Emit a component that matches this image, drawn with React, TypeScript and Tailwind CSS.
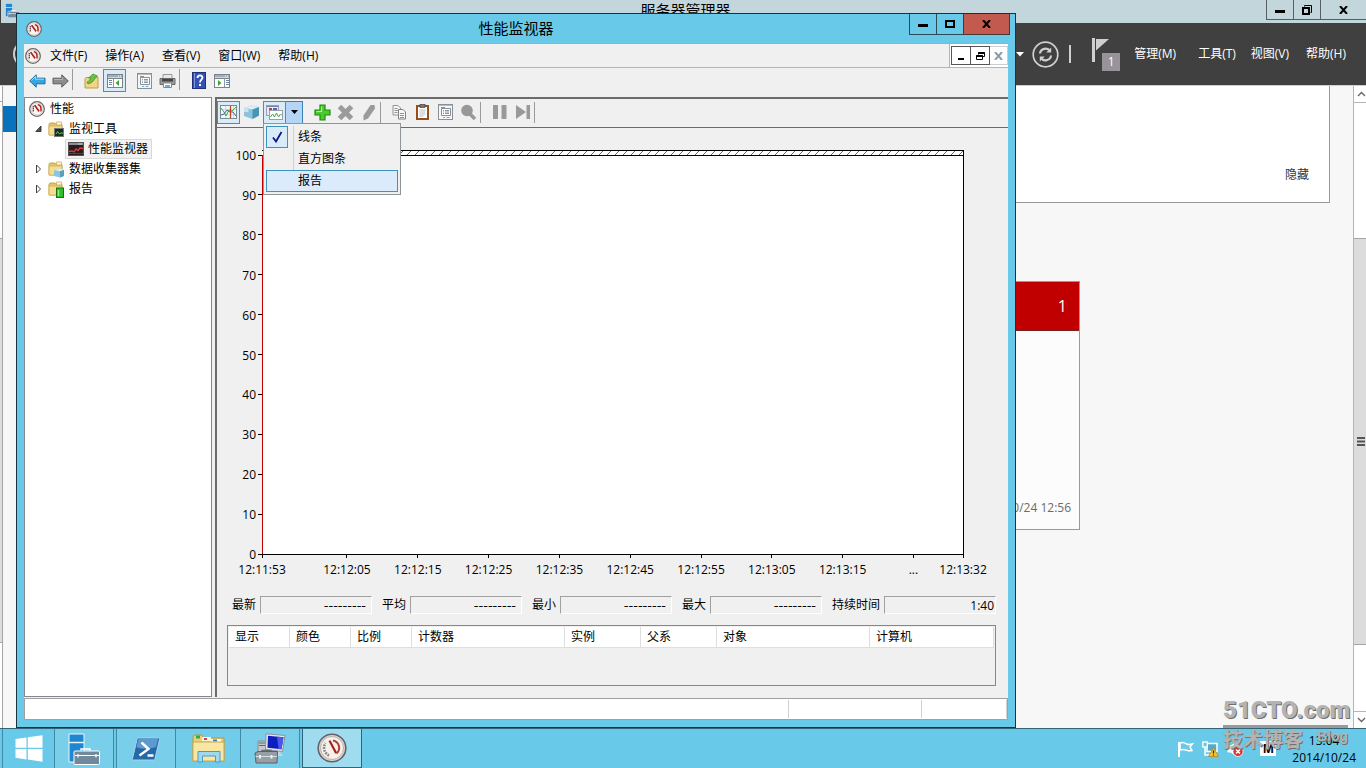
import type { ReactNode } from "react";
import clsx from "clsx";

const timeTicks = [
  { at: 0, label: "12:11:53" },
  { at: 12, label: "12:12:05" },
  { at: 22, label: "12:12:15" },
  { at: 32, label: "12:12:25" },
  { at: 42, label: "12:12:35" },
  { at: 52, label: "12:12:45" },
  { at: 62, label: "12:12:55" },
  { at: 72, label: "12:13:05" },
  { at: 82, label: "12:13:15" },
  { at: 92, label: "..." },
  { at: 99, label: "12:13:32" },
];

const valueTicks = [100, 90, 80, 70, 60, 50, 40, 30, 20, 10, 0];

const stats = [
  { id: "last", label: "最新" },
  { id: "average", label: "平均" },
  { id: "minimum", label: "最小" },
  { id: "maximum", label: "最大" },
];

const columns = [
  { name: "显示", width: "w-[61px]" },
  { name: "颜色", width: "w-[61px]" },
  { name: "比例", width: "w-[61px]" },
  { name: "计数器", width: "w-[153px]" },
  { name: "实例", width: "w-[76px]" },
  { name: "父系", width: "w-[76px]" },
  { name: "对象", width: "w-[153px]" },
  { name: "计算机", width: "w-auto" },
];

/* ---------- Icons ---------- */

function GaugeIcon({ size = 16 }: { size?: number }) {
  return (
    <svg width={size} height={size} viewBox="0 0 16 16">
      <circle cx="8" cy="8" r="7.3" fill="#f8f5f3" stroke="#6b6664" strokeWidth="1.3" />
      <circle cx="8" cy="8" r="6" fill="none" stroke="#cfc9c6" strokeWidth="0.8" />
      <path d="M4.300 5v5.500" fill="none" stroke="#6a4a48" strokeWidth="1.4" strokeDasharray="1.500 0.500" />
      <path d="M8.800 3.800c2 .2 3.200 2 3.200 4v2.700" fill="none" stroke="#b3201c" strokeWidth="1.500" />
      <path d="M4.800 4.500l1.600-.7 4.300 6-1.200 1.200z" fill="#b3201c" />
    </svg>
  );
}

function BigGaugeIcon() {
  return (
    <svg width="30" height="30" viewBox="0 0 30 30">
      <circle cx="15" cy="15" r="13.800" fill="#d9d5d2" stroke="#5f6266" strokeWidth="1.600" />
      <circle cx="15" cy="15" r="11.500" fill="#f7f1ec" stroke="#b9b2ad" />
      <path d="M12 22.500A8.500 8.500 0 0 1 8.500 10" fill="none" stroke="#85878b" strokeWidth="2.600" strokeDasharray="1.800 1" />
      <path d="M16 7.500c6 1 8.500 8.500 3.500 13" fill="none" stroke="#b93a31" strokeWidth="2" />
      <path d="M11.500 8l2-.8 6.500 12.300-1.800 1.200z" fill="#a81f18" />
    </svg>
  );
}

function ArrowIcon({ forward }: { forward?: boolean }) {
  return forward ? (
    <svg width="17" height="16" viewBox="0 0 17 16">
      <path d="M16.300 8 9.800 1.800v3.400H1v5.600h8.800v3.400z" fill="#8c8c8c" stroke="#5e5e5e" />
      <path d="M2 6.500h8.500V4.300" fill="none" stroke="#b5b5b5" />
    </svg>
  ) : (
    <svg width="17" height="16" viewBox="0 0 17 16">
      <path d="M.7 8l6.500-6.200v3.400H16v5.600H7.200v3.400z" fill="#37a6e0" stroke="#1d6ea8" />
      <path d="M2.500 7.500l4-4v2.700H15" fill="none" stroke="#9fdcf7" />
    </svg>
  );
}

function FolderShape() {
  return (
    <>
      <path d="M1 3.500 2 2h5l1 1.500h6V14H1z" fill="#e5c66b" stroke="#b6933a" strokeWidth="0.800" />
      <path d="M8.500 1h5v3h-5z" fill="#fdf7dd" stroke="#c3a550" strokeWidth="0.700" />
      <path d="M1 5h13v9H1z" fill="#f5dd8c" stroke="#d0b05c" strokeWidth="0.800" />
    </>
  );
}

function FolderUpIcon() {
  return (
    <svg width="16" height="16" viewBox="0 0 16 16">
      <path d="M1 6l1-1.500h4L7 6l7-2v11H1z" fill="#f3d684" stroke="#c09c48" />
      <path d="M3 9c2-.5 3-2 3.500-4.500L4.500 5 9 1l4.500 2-2 1C10.500 7.500 8 10 4 11z" fill="#6cc04a" stroke="#3b8f25" strokeWidth="0.700" />
    </svg>
  );
}

function TreeFolderIcon({ kind }: { kind: "monitor" | "collector" | "report" }) {
  return (
    <svg width="17" height="17" viewBox="0 0 17 17">
      <FolderShape />
      {kind === "monitor" && (
        <>
          <rect x="6.500" y="7.500" width="9" height="8" fill="#1d2a22" stroke="#777" />
          <path d="M8 13l1.500-2.500L11.500 13l1.500-1h2" fill="none" stroke="#4be04b" />
        </>
      )}
      {kind === "collector" && (
        <>
          <path d="M6 9l6-1.500L16 9v6l-4 1.500L6 15z" fill="#8cc4dd" />
          <path d="M6 9l6-1.500L16 9l-4 1.200z" fill="#d8eff8" />
          <path d="M12 10.200 16 9v6l-4 1.500z" fill="#5b9fbe" />
        </>
      )}
      {kind === "report" && (
        <>
          <rect x="8.500" y="7" width="7" height="9.500" fill="#2fbf2a" stroke="#14701a" />
          <path d="M10.500 9v6" stroke="#8df07d" strokeWidth="1.500" />
        </>
      )}
    </svg>
  );
}

function MonitorIcon() {
  return (
    <svg width="16" height="14" viewBox="0 0 16 14">
      <rect x="0.500" y="0.500" width="15" height="13" fill="#2a1d1f" stroke="#555" />
      <path d="M1 1h14v2H1z" fill="#8d8d96" />
      <path d="M10.500 2h1M12.500 2h1" stroke="#fff" />
      <path d="M1 9.500l3-.5 2 1 2-3 2 1.500L12 6l3 .5" fill="none" stroke="#e23b3b" strokeWidth="1.300" />
      <path d="M1 11.500h14" stroke="#6b3a3a" />
    </svg>
  );
}

function PaneIcon({ right }: { right?: boolean }) {
  return (
    <svg width="16" height="14" viewBox="0 0 16 14">
      <rect x="0.500" y="0.500" width="15" height="13" fill="#fff" stroke="#7a828c" />
      <path d="M1 1h14v2.500H1z" fill="#a3adb8" />
      <path d="M1 4.500h14" stroke="#7a828c" />
      <path d="M11 2h1M13 2h1" stroke="#fff" />
      <path d={right ? "M10.500 4v9" : "M6.500 4v9"} stroke="#8b97a5" />
      <path d={right ? "M12 6.500h3M12 8.500h3M12 10.500h3" : "M2 6.500h3M2 8.500h3M2 10.500h3"} stroke="#6a82a0" />
      <path d={right ? "M4 6v6l3.500-3z" : "M12 6v6L8.500 9z"} fill="#3fa52f" />
    </svg>
  );
}

function PropertiesIcon() {
  return (
    <svg width="16" height="16" viewBox="0 0 16 16">
      <rect x="0.500" y="0.500" width="14" height="15" fill="#f4f6f8" stroke="#8a9096" />
      <path d="M1 1.500h13" stroke="#b6bcc2" />
      <path d="M3.500 4.500h9v7h-9z" fill="#fff" stroke="#8a9096" />
      <path d="M3 3.500h4" stroke="#8a9096" />
      <path d="M5 6.500h1M7 6.500h4M5 8h1M7 8h4M5 9.500h1M7 9.500h4" stroke="#6c7a88" strokeWidth="0.800" />
      <path d="M5 13.500h2M8.500 13.500h3" stroke="#6bb6cc" />
    </svg>
  );
}

function PrinterIcon() {
  return (
    <svg width="17" height="16" viewBox="0 0 17 16">
      <path d="M4 1.500h9V6H4z" fill="#e8e8e8" stroke="#999" />
      <path d="M1 5.500h15v6H1z" fill="#9a9a9a" stroke="#6b6b6b" />
      <path d="M3 6h11v2.500H3z" fill="#444" />
      <path d="M4.500 10h8v4.500h-8z" fill="#fff" stroke="#888" />
      <path d="M6 12h5v2H6z" fill="#63b4d8" />
    </svg>
  );
}

function HelpIcon() {
  return (
    <svg width="14" height="17" viewBox="0 0 14 17">
      <rect x="0.500" y="0.500" width="13" height="16" fill="#3350b4" stroke="#1f2f7a" />
      <path d="M2.500 1v15" stroke="#7f96e0" />
      <path d="M5.500 6c0-3.400 5-3.200 5-.4C10.500 7.600 8 7.800 8 10.500" fill="none" stroke="#fff" strokeWidth="1.800" />
      <rect x="7" y="12" width="2" height="2" fill="#fff" />
    </svg>
  );
}

function ChartViewIcon() {
  return (
    <svg width="17" height="14" viewBox="0 0 17 14">
      <rect x="0.500" y="0.500" width="16" height="13" fill="#eef8f8" stroke="#7d8c93" />
      <path d="M1 4.500h15M1 9.500h15M5.500 1v12M13.500 1v12" stroke="#b7d3d8" strokeWidth="0.700" />
      <path d="M1 3l3 4 2 4 3-6 3 1 4-4" fill="none" stroke="#4ba54f" />
      <path d="M1 10l3-1 3-4 3 2 3 0 3 4" fill="none" stroke="#4c6496" />
      <path d="M10.500 1v12" stroke="#d03a1c" strokeWidth="1.200" />
    </svg>
  );
}

function CubeIcon() {
  return (
    <svg width="17" height="16" viewBox="0 0 17 16">
      <path d="M1 4l7-2.500L16 3v8.500L9.500 15 1 12z" fill="#8cc3da" />
      <path d="M1 4l7-2.500L16 3 9.500 5.500z" fill="#d9eef6" />
      <path d="M9.500 5.500 16 3v8.500L9.500 15z" fill="#4a94b5" />
      <path d="M1 4l4.500.8v3.500L1 8z" fill="#c4e4f0" />
    </svg>
  );
}

function GraphTypeIcon() {
  return (
    <svg width="17" height="15" viewBox="0 0 17 15">
      <rect x="0.500" y="0.500" width="12" height="10" fill="#e9ebf3" stroke="#9a9fb0" />
      <path d="M1 1.500h11" stroke="#7b80ad" />
      <path d="M3 3h3v3H3z" fill="#c23c50" />
      <path d="M7 3h4v2H7z" fill="#5a62b0" />
      <rect x="3.500" y="5.500" width="13" height="9" fill="#fff" stroke="#9a9fb0" />
      <path d="M4.500 12l2-3 2 3 2-4 2 4 2-3 1.500 1.500" fill="none" stroke="#45a545" />
    </svg>
  );
}

function PlusIcon() {
  return (
    <svg width="17" height="17" viewBox="0 0 17 17">
      <path d="M6 1h5v5h5v5h-5v5H6v-5H1V6h5z" fill="#4cc92c" stroke="#1f8a12" strokeWidth="1.200" />
      <path d="M7.500 2.500v5h-5" fill="none" stroke="#b2f09a" strokeWidth="1.200" />
    </svg>
  );
}

function DeleteIcon() {
  return (
    <svg width="17" height="17" viewBox="0 0 17 17">
      <path d="M2.500 2.500l12 12M14.500 2.500l-12 12" stroke="#9b9b9b" strokeWidth="5" />
    </svg>
  );
}

function HighlightIcon() {
  return (
    <svg width="14" height="17" viewBox="0 0 14 17">
      <path d="M8.500 1h4l.5 3.500L6 14.500 1.500 16.500l0-5z" fill="#9b9b9b" />
    </svg>
  );
}

function CopyIcon() {
  return (
    <svg width="15" height="16" viewBox="0 0 15 16">
      <path d="M1 1.500h5l2.500 2.500v7H1z" fill="#f6f6f6" stroke="#929292" />
      <path d="M2.500 4.500h3M2.500 6.500h4M2.500 8.500h3" stroke="#929292" />
      <path d="M6.500 5.500h4.500L13.500 8v7h-7z" fill="#f6f6f6" stroke="#808080" />
      <path d="M8 9.500h4M8 11.500h4M8 13.500h4" stroke="#929292" />
    </svg>
  );
}

function PasteIcon() {
  return (
    <svg width="13" height="16" viewBox="0 0 13 16">
      <rect x="1" y="2" width="11" height="13" fill="#fff" stroke="#93501c" strokeWidth="2" />
      <rect x="4" y="0.500" width="5" height="3" fill="#777" stroke="#444" strokeWidth="0.700" />
      <path d="M3.500 6h6M3.500 8h6M3.500 10h6M3.500 12h4" stroke="#b6bcc2" />
    </svg>
  );
}

function ZoomIcon() {
  return (
    <svg width="17" height="16" viewBox="0 0 17 16">
      <circle cx="7" cy="6.500" r="5.800" fill="#989898" />
      <path d="M10 10l5 5" stroke="#989898" strokeWidth="3.500" />
    </svg>
  );
}

function PauseIcon() {
  return (
    <svg width="14" height="14" viewBox="0 0 14 14">
      <path d="M0 0h5v14H0zM8.500 0h5v14h-5z" fill="#999" />
    </svg>
  );
}

function NextIcon() {
  return (
    <svg width="14" height="14" viewBox="0 0 14 14">
      <path d="M0 0l10 7-10 7zM10.500 0H14v14h-3.500z" fill="#999" />
    </svg>
  );
}

function MinimizeGlyph() {
  return (
    <svg width="10" height="10" viewBox="0 0 10 10">
      <path d="M0 5h10v3H0z" fill="#000" />
    </svg>
  );
}

function MaximizeGlyph() {
  return (
    <svg width="10" height="8" viewBox="0 0 10 8">
      <rect x="1" y="1" width="8" height="6" fill="none" stroke="#000" strokeWidth="2" />
    </svg>
  );
}

function RestoreGlyph() {
  return (
    <svg width="10" height="10" viewBox="0 0 10 10">
      <path d="M2.500 1.500V.5h7v7h-1" fill="none" stroke="#000" />
      <rect x="1" y="3" width="6" height="6" fill="none" stroke="#000" strokeWidth="2" />
    </svg>
  );
}

function CloseGlyph({ color = "#000" }: { color?: string }) {
  return (
    <svg width="9" height="8" viewBox="0 0 9 8">
      <path d="M1 0l7 8M8 0 1 8" stroke={color} strokeWidth="2" />
    </svg>
  );
}

function ServerIcon({ size }: { size: number }) {
  return (
    <svg width={size} height={size} viewBox="0 0 32 32">
      <path d="M1 1h15v28H1z" fill="#1f86d0" stroke="#e8f6fc" />
      <path d="M1 9.500h15" stroke="#e8f6fc" strokeWidth="1.500" />
      <path d="M13 17.500V16h9v1.500" fill="none" stroke="#fff" strokeWidth="1.500" />
      <rect x="6" y="18" width="25.500" height="13.500" rx="1" fill="#71899a" stroke="#fff" />
      <path d="M7 22.500h24M10 21v3.500M28 21v3.500" stroke="#fff" strokeWidth="1.200" />
    </svg>
  );
}

function StartIcon() {
  return (
    <svg width="28" height="27" viewBox="0 0 28 27">
      <path d="M.5 4 11.500 2.400V12.700H.5zM12.800 2.200 27.500.2v12.500H12.800zM.5 14h11v10.400L.5 22.800zM12.800 14h14.700v12.700l-14.700-2.100z" fill="#fff" />
    </svg>
  );
}

function PowerShellIcon() {
  return (
    <svg width="28" height="24" viewBox="0 0 28 24">
      <path d="M6 1h20.500c1 0 1.200.6 1 1.500L23 21.500c-.3 1-1 1.500-2 1.500H1.500C.6 23 .3 22.400.5 21.500L5 2.500C5.200 1.500 5.500 1 6 1z" fill="#2469a8" stroke="#a9d3ee" />
      <path d="M6.500 2h19.500l-2 8C17 12 9 12 4.500 10z" fill="#5a9bd0" />
      <path d="M9.500 5.500l7 6.500-9 6.500M15.500 18.500h6" fill="none" stroke="#fff" strokeWidth="2.400" />
    </svg>
  );
}

function ExplorerIcon() {
  return (
    <svg width="33" height="29" viewBox="0 0 33 29">
      <path d="M1 3l1-2h8l1 3h21v23H1z" fill="#ead07a" stroke="#b8963e" />
      <path d="M4 1.500h4v3H4z" fill="#36a84a" />
      <path d="M10 3h9v4h-9z" fill="#fbf6e2" />
      <path d="M12 4h3v2h-3z" fill="#d0492e" />
      <path d="M19 5h10v3H19z" fill="#fbf6e2" />
      <path d="M21 5.500h4v2h-4z" fill="#3a7fc0" />
      <path d="M1 8h31v19H1z" fill="#f8e7a2" stroke="#c9a952" />
      <path d="M6 28V17.500h22V28h-4.500v-6h-13v6z" fill="#9fd8f0" stroke="#4d9ac4" />
    </svg>
  );
}

function ToolsIcon() {
  return (
    <svg width="32" height="31" viewBox="0 0 32 31">
      <path d="M4 8h8v13H4z" fill="#c6cacd" stroke="#858b91" />
      <path d="M5 10h6M5 12.500h6" stroke="#5e646a" />
      <path d="M12 .8l19 1.700-2.500 16-17-2z" fill="#e6eaed" stroke="#8b939a" />
      <path d="M14 2.800l15.500 1.500-2 12-14-1.600z" fill="#0e1fc0" />
      <path d="M23 3.700l6.500.6-2 12-3-.4z" fill="#4858e8" />
      <path d="M19 18l7 1 3 4h-9z" fill="#cdd3d8" />
      <path d="M8 20v-2.500h9V20" fill="none" stroke="#666e76" strokeWidth="1.500" />
      <path d="M1 20l3-1.500h19.500L23 30H2z" fill="#979fa6" stroke="#596067" />
      <path d="M1.500 23.500h21.500" stroke="#d8dde1" />
      <path d="M6 22v3.500M17.500 22v3.500" stroke="#f0f0f0" strokeWidth="2" />
    </svg>
  );
}

/* ---------- Small building blocks ---------- */

function ToolButton({
  label,
  active,
  children,
}: {
  label: string;
  active?: boolean;
  children: ReactNode;
}) {
  return (
    <button
      type="button"
      aria-label={label}
      className={clsx(
        "flex h-[23px] w-[23px] shrink-0 items-center justify-center",
        active && "border border-[#3c93bd] bg-[#d8ebf7]"
      )}
    >
      {children}
    </button>
  );
}

function Separator() {
  return <div className="h-[21px] w-2 shrink-0 border-l border-[#9a9a9a]" />;
}

function TreeItem({
  label,
  icon,
  arrow,
}: {
  label: string;
  icon: ReactNode;
  arrow?: "open" | "closed";
}) {
  return (
    <div className="flex h-5 items-center">
      <svg width="8" height="10" viewBox="0 0 8 10" className="mr-[5px] ml-[10px]">
        {arrow === "open" ? (
          <path d="M6 2v5.500H.8z" fill="#555" stroke="#222" strokeWidth="0.800" />
        ) : (
          <path d="M1.500 1v8l4-4z" fill="#fff" stroke="#444" />
        )}
      </svg>
      {icon}
      <span className="ml-1">{label}</span>
    </div>
  );
}

/* ---------- Server manager behind the monitor ---------- */

function ServerManager() {
  return (
    <section className="flex h-full flex-col bg-[#f7f7f7]">
      <header className="grid h-[23px] shrink-0 grid-cols-[1fr_auto_1fr] border-l border-[#404040] bg-[#c3d6dc] pl-1">
        <div className="pt-[3px]">
          <ServerIcon size={15} />
        </div>
        <h2 className="text-[15px] leading-5">服务器管理器</h2>
        <div className="flex h-5 justify-end">
          <button type="button" aria-label="最小化" className="flex w-7 items-center justify-center border border-t-0 border-[#555f63]">
            <MinimizeGlyph />
          </button>
          <button type="button" aria-label="还原" className="flex w-[26px] items-center justify-center border-b border-[#555f63]">
            <RestoreGlyph />
          </button>
          <button type="button" aria-label="关闭" className="flex w-[46px] items-center justify-center border-b border-l border-[#555f63]">
            <CloseGlyph />
          </button>
        </div>
      </header>

      <div className="flex h-[63px] shrink-0 items-center border-b border-[#cfcfcf] bg-[#404040] pr-5 pl-[13px] text-xs text-white">
        <button type="button" aria-label="返回" className="h-7 w-7 rounded-full border-2 border-[#cfcfcf]" />
        <svg width="8" height="5" viewBox="0 0 8 5" className="ml-auto">
          <path d="M0 0h8L4 4.500z" fill="#fff" />
        </svg>
        <button type="button" aria-label="刷新" className="ml-2">
          <svg width="27" height="27" viewBox="0 0 27 27" fill="none" stroke="#cfcfcf">
            <circle cx="13.500" cy="13.500" r="12.300" strokeWidth="1.700" />
            <path d="M8 12.500c.5-5 7.500-6.500 10-2.500M19 14.500c-.5 5-7.500 6.500-10 2.500" strokeWidth="2.200" />
            <path d="M19.200 6.500v5h-5zM7.800 20.500v-5h5z" fill="#cfcfcf" stroke="none" />
          </svg>
        </button>
        <div className="ml-[10px] h-[18px] w-[2px] bg-[#cfcfcf]" />
        <button type="button" aria-label="通知" className="relative mr-[14px] ml-[21px] h-[34px] w-7">
          <svg width="18" height="34" viewBox="0 0 18 34">
            <path d="M0 1h3v24H0z" fill="#cfcfcf" />
            <path d="M4 2h13L4 13.500z" fill="#cfcfcf" />
          </svg>
          <span className="absolute right-0 bottom-0 h-[18px] w-[18px] bg-[#98929a] text-center leading-[18px]">
            1
          </span>
        </button>
        <button type="button" className="mr-[22px]">管理(M)</button>
        <button type="button" className="mr-[15px]">工具(T)</button>
        <button type="button" className="mr-[17px]">视图(V)</button>
        <button type="button">帮助(H)</button>
      </div>

      <div className="flex min-h-0 flex-1">
        <div className="flex w-[3px] flex-col border-r border-[#a5a5a5] bg-white">
          <div className="h-4 border-b border-[#a5a5a5]" />
          <div className="mt-[136px] h-[405px] border-y border-[#a5a5a5] bg-[#dcdcdc]" />
        </div>
        <nav className="w-[180px] pt-5">
          <div className="h-[26px] bg-[#0a72bd]" />
        </nav>
        <main className="min-w-0 flex-1">
          <div className="mr-[23px] flex h-[117px] items-end justify-end border-r border-b border-[#999] bg-white px-5 pb-[19px]">
            <a href="#hide" className="text-xs leading-4 text-[#333]">隐藏</a>
          </div>
          <article className="mt-[78px] mr-[273px] ml-auto flex h-[249px] w-[240px] flex-col border border-[#999] bg-[#fcfcfc]">
            <div className="flex h-[49px] items-center justify-end border-b border-[#7a2020] bg-[#c00000] pr-3 text-base text-white">
              1
            </div>
            <p className="mt-auto pr-2 pb-[11px] text-right text-xs leading-5 text-[#6b6b6b]">
              2014/10/24 12:56
            </p>
          </article>
        </main>
        <div className="flex w-[13px] shrink-0 flex-col border-l border-[#b5b5b5] bg-white">
          <div className="flex h-[17px] items-center justify-end border-b border-[#b5b5b5]">
            <svg width="9" height="6" viewBox="0 0 9 6">
              <path d="M1 5l3.500-3.500L8 5" fill="none" stroke="#666" strokeWidth="1.400" />
            </svg>
          </div>
          <div className="mt-[135px] mb-[66px] flex flex-1 items-center justify-end border-y border-[#a5a5a5] bg-[#dcdcdc]">
            <svg width="10" height="9" viewBox="0 0 10 9">
              <path d="M1 1h8M1 4.500h8M1 8h8" stroke="#555" strokeWidth="2" />
            </svg>
          </div>
          <div className="flex h-[17px] items-center justify-end border-t border-[#b5b5b5]">
            <svg width="9" height="6" viewBox="0 0 9 6">
              <path d="M1 1l3.500 3.500L8 1" fill="none" stroke="#666" strokeWidth="1.400" />
            </svg>
          </div>
        </div>
      </div>
    </section>
  );
}

/* ---------- Performance monitor ---------- */

function TypeMenu() {
  return (
    <div role="menu" className="absolute top-[22px] left-0 z-10 w-[138px] border border-[#8f9699] bg-[#f0f0f0] p-[2px]">
      <button type="button" role="menuitem" className="flex h-[22px] w-full items-center">
        <span className="flex h-[22px] w-[22px] items-center justify-center border border-[#3c93bd] bg-[#d8ebfb]">
          <svg width="11" height="12" viewBox="0 0 11 12">
            <path d="M1 6.500l3 4L9.500 1" fill="none" stroke="#0b1a80" strokeWidth="1.800" />
          </svg>
        </span>
        <span className="ml-[5px] h-full border-l border-[#d0d0d0] pl-1 leading-[22px]">线条</span>
      </button>
      <button type="button" role="menuitem" className="flex h-[22px] w-full items-center pl-[27px]">
        <span className="h-full border-l border-[#d0d0d0] pl-1 leading-[22px]">直方图条</span>
      </button>
      <button type="button" role="menuitem" className="flex h-[22px] w-full items-center border border-[#3c93bd] bg-[#dcebfc] pl-[31px]">
        报告
      </button>
    </div>
  );
}

function Chart() {
  return (
    <div className="mt-[22px] mr-[45px] ml-[45px] flex min-h-0 flex-1 flex-col">
      <svg className="block h-[5px] w-full shrink-0 overflow-visible">
        <defs>
          <pattern id="hatch" width="8" height="5" patternUnits="userSpaceOnUse">
            <path d="M1 5l5-5" stroke="#555" strokeWidth="0.900" />
          </pattern>
        </defs>
        <rect width="100%" height="5" fill="#fff" />
        <rect width="100%" height="5" fill="url(#hatch)" />
        <rect width="100%" height="1" fill="#000" />
        <rect x="100%" width="1" height="5" fill="#000" />
      </svg>
      <div className="min-h-0 flex-1 bg-white">
        <svg className="block h-full w-full overflow-visible" fontSize="12" shapeRendering="crispEdges">
          <line x1="0" y1="0" x2="100%" y2="0" stroke="#000" />
          <line x1="100%" y1="0" x2="100%" y2="100%" stroke="#000" />
          <line x1="0" y1="0" x2="0" y2="100%" stroke="#c00000" />
          <line x1="0" y1="100%" x2="100%" y2="100%" stroke="#000" />
          {valueTicks.map((v) => (
            <g key={v}>
              <line x1="-4" x2="0" y1={`${100 - v}%`} y2={`${100 - v}%`} stroke="#000" />
              <text x="-6" y={`${100 - v}%`} dy="5" textAnchor="end">
                {v}
              </text>
            </g>
          ))}
          {timeTicks.map((t) => (
            <svg key={t.at} x={`${(t.at / 99) * 100}%`} y="100%" overflow="visible">
              <line x1="0" x2="0" y1="0" y2="4" stroke="#000" />
              <text x="0" y="20" textAnchor="middle">
                {t.label}
              </text>
            </svg>
          ))}
        </svg>
      </div>
    </div>
  );
}

function MonitorPane() {
  return (
    <section className="flex min-w-0 flex-1 flex-col border-t-2 border-l-2 border-[#6b6b6b] bg-[#f0f0f0]">
      <div className="flex h-[29px] shrink-0 items-center border-b border-[#6b6b6b] pb-[2px]">
        <ToolButton label="查看当前活动" active>
          <ChartViewIcon />
        </ToolButton>
        <ToolButton label="查看日志数据">
          <CubeIcon />
        </ToolButton>
        <div className="relative mr-2 flex">
          <ToolButton label="更改图形类型" active>
            <GraphTypeIcon />
          </ToolButton>
          <button type="button" aria-label="图形类型" className="flex h-[23px] w-[17px] items-center justify-center border border-l-0 border-[#3c7fb5] bg-[#b5d5f7]">
            <svg width="7" height="4" viewBox="0 0 7 4">
              <path d="M0 0h7L3.500 4z" fill="#000" />
            </svg>
          </button>
          <TypeMenu />
        </div>
        <ToolButton label="添加"><PlusIcon /></ToolButton>
        <ToolButton label="删除"><DeleteIcon /></ToolButton>
        <ToolButton label="突出显示"><HighlightIcon /></ToolButton>
        <Separator />
        <ToolButton label="复制属性"><CopyIcon /></ToolButton>
        <ToolButton label="粘贴计数器列表"><PasteIcon /></ToolButton>
        <ToolButton label="属性"><PropertiesIcon /></ToolButton>
        <ToolButton label="缩放"><ZoomIcon /></ToolButton>
        <Separator />
        <ToolButton label="冻结显示"><PauseIcon /></ToolButton>
        <ToolButton label="更新数据"><NextIcon /></ToolButton>
        <Separator />
      </div>

      <Chart />

      {/* Counter values */}
      <div className="mt-[42px] flex h-[18px] shrink-0 items-center gap-[10px] pl-[15px]">
        {stats.map((s) => (
          <div key={s.id} className="flex items-center gap-1">
            <label htmlFor={s.id}>{s.label}</label>
            <input
              id={s.id}
              readOnly
              value="---------"
              className="h-[18px] w-[112px] border border-[#a0a0a0] border-r-white border-b-white pr-[5px] text-right font-['DejaVu_Sans',sans-serif] text-[13px]"
            />
          </div>
        ))}
        <div className="flex items-center gap-1">
          <label htmlFor="duration">持续时间</label>
          <input
            id="duration"
            readOnly
            value="1:40"
            className="h-[18px] w-[112px] border border-[#a0a0a0] border-r-white border-b-white pr-px text-right"
          />
        </div>
      </div>

      {/* Legend */}
      <div className="mt-[11px] mr-3 mb-[11px] ml-[10px] h-[61px] shrink-0 border border-[#828790] p-px">
        <table className="w-full table-fixed border-separate border-spacing-0">
          <thead>
            <tr>
              {columns.map((c) => (
                <th
                  key={c.name}
                  className={clsx(
                    "h-[21px] border-r border-b border-[#dedede] bg-white p-0 pl-[6px] text-left font-normal",
                    c.width
                  )}
                >
                  {c.name}
                </th>
              ))}
            </tr>
          </thead>
        </table>
      </div>
    </section>
  );
}

function PerformanceMonitor() {
  return (
    <div className="absolute top-[13px] right-[350px] bottom-0 left-4 flex flex-col border border-[#17333d] bg-[#68cae8] px-[7px] pb-[7px]">
      <header className="grid h-[29px] shrink-0 grid-cols-[1fr_auto_1fr]">
        <div className="flex items-center pl-[2px]">
          <GaugeIcon />
        </div>
        <h1 className="text-[15px] leading-[29px]">性能监视器</h1>
        <div className="-mr-[2px] flex h-[21px] justify-end">
          <button type="button" aria-label="最小化" className="flex w-7 items-center justify-center border border-t-0 border-[#2b4b57]">
            <MinimizeGlyph />
          </button>
          <button type="button" aria-label="最大化" className="flex w-[26px] items-center justify-center border-b border-[#2b4b57]">
            <MaximizeGlyph />
          </button>
          <button type="button" aria-label="关闭" className="flex w-[47px] items-center justify-center border border-t-0 border-[#4b3535] bg-[#c35a4f]">
            <CloseGlyph />
          </button>
        </div>
      </header>

      <div className="flex min-h-0 flex-1 flex-col border-t border-[#8fb4c0] bg-[#f0f0f0]">
        <nav className="flex h-6 shrink-0 items-center border-b border-[#b5b5b5] pl-px">
          <GaugeIcon />
          <button type="button" className="px-[9px]">文件(F)</button>
          <button type="button" className="px-[9px]">操作(A)</button>
          <button type="button" className="px-[9px]">查看(V)</button>
          <button type="button" className="px-[9px]">窗口(W)</button>
          <button type="button" className="px-[9px]">帮助(H)</button>
          <div className="ml-auto flex h-full items-center border-l border-[#b5b5b5] bg-white pl-px">
            <button type="button" aria-label="最小化子窗口" className="flex h-[19px] w-5 items-end justify-center border border-[#555] pb-1">
              <svg width="6" height="2" viewBox="0 0 6 2">
                <path d="M0 0h6v2H0z" />
              </svg>
            </button>
            <button type="button" aria-label="还原子窗口" className="flex h-[19px] w-[19px] items-center justify-center border border-l-0 border-[#555]">
              <svg width="9" height="8" viewBox="0 0 9 8" fill="none" stroke="#000">
                <path d="M2.500 2.500v-2h6v4h-2" />
                <path d="M2.500 1h6M.5 4h6" strokeWidth="2" />
                <path d="M.5 3.500h6v4h-6z" />
              </svg>
            </button>
            <button type="button" aria-label="关闭子窗口" className="flex h-[19px] w-[18px] items-center justify-center border border-l-0 border-[#c8ced2]">
              <CloseGlyph color="#8b9dab" />
            </button>
          </div>
        </nav>

        <div className="flex h-[29px] shrink-0 items-start pt-px pl-[2px]">
          <ToolButton label="后退"><ArrowIcon /></ToolButton>
          <ToolButton label="前进"><ArrowIcon forward /></ToolButton>
          <Separator />
          <ToolButton label="上一级"><FolderUpIcon /></ToolButton>
          <ToolButton label="显示控制台树" active><PaneIcon /></ToolButton>
          <div className="w-[7px]" />
          <ToolButton label="属性"><PropertiesIcon /></ToolButton>
          <ToolButton label="打印"><PrinterIcon /></ToolButton>
          <Separator />
          <ToolButton label="帮助"><HelpIcon /></ToolButton>
          <ToolButton label="显示操作窗格"><PaneIcon right /></ToolButton>
        </div>

        <div className="flex min-h-0 flex-1 gap-[3px] pb-px">
          <aside className="w-[188px] shrink-0 border border-[#828790] bg-white">
            <div className="flex h-[21px] items-center gap-[5px] pt-px pl-1">
              <GaugeIcon />
              <span>性能</span>
            </div>
            <TreeItem label="监视工具" arrow="open" icon={<TreeFolderIcon kind="monitor" />} />
            <div className="ml-10 flex h-5 w-[87px] items-center gap-1 border border-[#d9d9d9] bg-[#f2f2f2] pl-[2px]">
              <MonitorIcon />
              <span>性能监视器</span>
            </div>
            <TreeItem label="数据收集器集" arrow="closed" icon={<TreeFolderIcon kind="collector" />} />
            <TreeItem label="报告" arrow="closed" icon={<TreeFolderIcon kind="report" />} />
          </aside>
          <MonitorPane />
        </div>

        <footer className="flex h-[22px] shrink-0 justify-end border border-[#a0a0a0] bg-white">
          <div className="my-px w-[133px] border-l border-[#d0d0d0]" />
          <div className="my-px w-[86px] border-x border-[#d0d0d0]" />
        </footer>
      </div>
    </div>
  );
}

/* ---------- Taskbar ---------- */

function Taskbar() {
  return (
    <footer className="flex h-10 shrink-0 border-t border-[#2f6577] bg-[#68cae8] pl-[2px]">
      <button type="button" aria-label="开始" className="flex w-[53px] items-center justify-center border-x border-[#3f8ba3]">
        <StartIcon />
      </button>
      <button type="button" aria-label="服务器管理器" className="flex w-[59px] items-center justify-center border-r border-[#3f8ba3] bg-[#79cfe9]">
        <ServerIcon size={32} />
      </button>
      <button type="button" aria-label="PowerShell" className="ml-[2px] flex w-[60px] items-center justify-center border-x border-[#3f8ba3] bg-[#79cfe9]">
        <PowerShellIcon />
      </button>
      <button type="button" aria-label="文件资源管理器" className="flex w-[65px] items-center justify-center border-r border-[#3f8ba3] bg-[#70cce9]">
        <ExplorerIcon />
      </button>
      <button type="button" aria-label="管理工具" className="flex w-[59px] items-center justify-center border-r border-[#3f8ba3] bg-[#79cfe9]">
        <ToolsIcon />
      </button>
      <button type="button" aria-label="性能监视器" className="ml-[2px] flex w-[60px] items-center justify-center border border-t-0 border-[#2f6577] bg-[#a0dcef]">
        <BigGaugeIcon />
      </button>

      <div className="ml-auto flex items-center gap-2 pr-[10px] text-xs">
        <svg width="17" height="16" viewBox="0 0 17 16">
          <path d="M2 1v15" stroke="#fff" strokeWidth="2" />
          <path d="M3 2c3-1 5 0 6.500 1 2 1 4 .5 6 0l-2.500 3 2 3.500c-3 1-4.500 0-6-.5-2-.8-4-.5-6 0z" fill="#68cae8" stroke="#fff" strokeWidth="1.500" />
        </svg>
        <svg width="17" height="16" viewBox="0 0 17 16">
          <path d="M5 2.500h10v8H5z" fill="#57a9c4" stroke="#fff" strokeWidth="1.500" />
          <path d="M3 6v8h5" fill="none" stroke="#fff" strokeWidth="1.500" />
          <rect x="0.800" y="1" width="4.500" height="5" fill="#68cae8" stroke="#fff" strokeWidth="1.300" />
          <path d="M11.500 6.500 16.500 15.500h-10z" fill="#fbc02d" stroke="#a8760d" strokeWidth="0.600" />
          <path d="M11.500 9.500v3M11.500 13.500v1" stroke="#222" strokeWidth="1.200" />
        </svg>
        <svg width="17" height="16" viewBox="0 0 17 16">
          <path d="M1 5h3l5-4v14l-5-4H1z" fill="#eaf6fb" stroke="#fff" />
          <circle cx="11" cy="10.500" r="5" fill="#d4352c" stroke="#fff" strokeWidth="0.700" />
          <path d="M9 8.500l4 4M13 8.500l-4 4" stroke="#fff" strokeWidth="1.600" />
        </svg>
        <span className="mx-2 h-[15px] w-4 bg-white text-center font-bold leading-[15px]">M</span>
        <div className="text-center leading-[17px]">
          <div>13:04</div>
          <div>2014/10/24</div>
        </div>
      </div>
    </footer>
  );
}

function Watermark() {
  return (
    <div className="pointer-events-none absolute right-[18px] bottom-4 z-20 w-[125px] text-[#b3b3b3] [text-shadow:1px_1px_0_#6f6f6f]">
      <div className="border-b-[3px] border-[#9a9a9a] font-['Roboto',sans-serif] text-2xl leading-[30px] font-black">
        51CTO.com
      </div>
      <div className="flex items-start justify-between font-bold">
        <span className="text-xl leading-6">技术博客</span>
        <span className="font-['Liberation_Sans',sans-serif] text-sm leading-4">Blog</span>
      </div>
    </div>
  );
}

export default function App() {
  return (
    <div className="relative flex h-screen min-h-[600px] flex-col overflow-hidden font-['Open_Sans','Noto_Sans_CJK_SC',sans-serif] text-xs text-black">
      <div className="relative min-h-0 flex-1">
        <ServerManager />
        <PerformanceMonitor />
      </div>
      <Taskbar />
      <Watermark />
    </div>
  );
}
